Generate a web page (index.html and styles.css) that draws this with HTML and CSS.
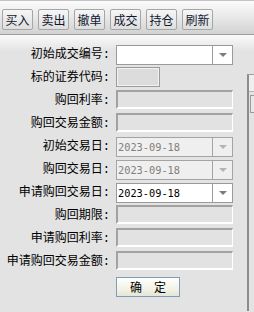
FILE: index.html
```html
<!DOCTYPE html>
<html>
<head>
    <title>购回申请</title>
    <link rel="stylesheet" href="styles.css">
</head>
<body>
    <div class="toolbar">
        <button class="tb-btn">买入</button>
        <button class="tb-btn">卖出</button>
        <button class="tb-btn">撤单</button>
        <button class="tb-btn">成交</button>
        <button class="tb-btn">持仓</button>
        <button class="tb-btn">刷新</button>
    </div>

    <div class="main">
        <div class="form">
            <div class="row">
                <div class="lbl">初始成交编号:</div>
                <div class="combo">
                    <div class="combo-text"></div>
                    <div class="combo-arrow"><span class="tri"></span></div>
                </div>
            </div>
            <div class="row">
                <div class="lbl">标的证券代码:</div>
                <div class="box-small"></div>
            </div>
            <div class="row">
                <div class="lbl">购回利率:</div>
                <div class="box"></div>
            </div>
            <div class="row">
                <div class="lbl">购回交易金额:</div>
                <div class="box"></div>
            </div>
            <div class="row">
                <div class="lbl">初始交易日:</div>
                <div class="combo disabled">
                    <div class="combo-text">2023-09-18</div>
                    <div class="combo-arrow"><span class="tri"></span></div>
                </div>
            </div>
            <div class="row">
                <div class="lbl">购回交易日:</div>
                <div class="combo disabled">
                    <div class="combo-text">2023-09-18</div>
                    <div class="combo-arrow"><span class="tri"></span></div>
                </div>
            </div>
            <div class="row">
                <div class="lbl">申请购回交易日:</div>
                <div class="combo">
                    <div class="combo-text">2023-09-18</div>
                    <div class="combo-arrow"><span class="tri"></span></div>
                </div>
            </div>
            <div class="row">
                <div class="lbl">购回期限:</div>
                <div class="box"></div>
            </div>
            <div class="row">
                <div class="lbl">申请购回利率:</div>
                <div class="box"></div>
            </div>
            <div class="row">
                <div class="lbl">申请购回交易金额:</div>
                <div class="box"></div>
            </div>
            <div class="actions">
                <button class="ok-btn">确　定</button>
            </div>
        </div>

        <div class="side">
            <div class="side-head"></div>
            <div class="side-box"></div>
        </div>
    </div>
</body>
</html>
```

FILE: styles.css
```css
body {
    margin: 0;
    width: 254px;
    height: 312px;
    overflow: hidden;
    font-family: "Noto Sans CJK SC", "Liberation Sans", sans-serif;
    font-size: 12px;
    color: #000;
    background-color: #e3e3e3;
}

.toolbar {
    display: flex;
    gap: 5px;
    height: 35px;
    box-sizing: border-box;
    padding: 8px 0 0 2px;
    border-top: 1px solid #c4c4c4;
    border-bottom: 1px solid #9c9c9c;
    background: linear-gradient(to bottom, #fbfbfb, #ececec 40%, #d2d2d2);
}

.tb-btn {
    width: 31px;
    height: 21px;
    padding: 0;
    font-family: inherit;
    font-size: 12px;
    line-height: 18px;
    color: #101830;
    border: 1px solid #a6a6a6;
    border-radius: 2px;
    background: linear-gradient(to bottom, #f6f6f6, #dedede);
}

.main {
    display: flex;
    height: 276px;
    background: linear-gradient(to bottom, #fafafa, #e3e3e3 16px);
}

.form {
    width: 247px;
    padding-top: 9px;
}

.row {
    display: flex;
    height: 23px;
}

/* colon from the mono font so it takes a half-width cell */
.lbl {
    width: 110px;
    font-family: "Liberation Mono", "Noto Sans CJK SC", monospace;
    line-height: 22px;
    text-align: right;
    white-space: nowrap;
}

.combo {
    display: flex;
    margin: 1px 0 0 6px;
    width: 117px;
    height: 20px;
    box-sizing: border-box;
    border: 1px solid #9a9a9a;
    background-color: #fff;
}

.combo-text {
    flex: 1;
    padding-left: 1px;
    font-family: "DejaVu Sans Mono", monospace;
    font-size: 10.3px;
    line-height: 18px;
    color: #000;
}

.combo-arrow {
    width: 19px;
    border-left: 1px solid #9a9a9a;
    display: flex;
    align-items: center;
    justify-content: center;
}

.tri {
    width: 0;
    height: 0;
    border-left: 4px solid transparent;
    border-right: 4px solid transparent;
    border-top: 4px solid #7c7c7c;
}

.combo.disabled {
    border-color: #a4a4a4;
    background-color: #efefef;
}

.combo.disabled .combo-text {
    color: #808080;
}

.combo.disabled .combo-arrow {
    border-left-color: #a4a4a4;
}

.combo.disabled .tri {
    border-top-color: #b4b4b4;
}

.box-small {
    margin: 0 0 0 6px;
    width: 44px;
    height: 20px;
    box-sizing: border-box;
    border: 1px solid #9a9a9a;
    box-shadow: inset 1px 1px 0 #f2f2f2, inset -1px -1px 0 #f2f2f2;
    background-color: #dcdcdc;
}

.box {
    margin: 0 0 0 6px;
    width: 117px;
    height: 19px;
    box-sizing: border-box;
    border-top: 2px solid #a2a2a2;
    border-left: 2px solid #a2a2a2;
    border-right: 1px solid #fff;
    border-bottom: 2px solid #fff;
    background-color: #e2e2e2;
}

.actions {
    padding: 3px 0 0 116px;
}

.ok-btn {
    width: 64px;
    height: 20px;
    padding: 0;
    font-family: inherit;
    font-size: 12px;
    line-height: 18px;
    color: #000;
    border: 1px solid #7f9db9;
    background: linear-gradient(to bottom, #ffffff, #f2f2e6 60%, #e6e6d6);
}

.side {
    flex: 1;
    margin-top: 39px;
    border-top: 1px solid #a0a0a0;
    border-left: 2px solid #8c8c8c;
}

.side-head {
    height: 16px;
    border-bottom: 1px solid #b4b4b4;
    background-color: #efefef;
}

.side-box {
    margin: 3px 0 0 1px;
    height: 16px;
    border: 1px solid #9a9a9a;
    border-right: none;
    background-color: #e8e8e8;
}
```
